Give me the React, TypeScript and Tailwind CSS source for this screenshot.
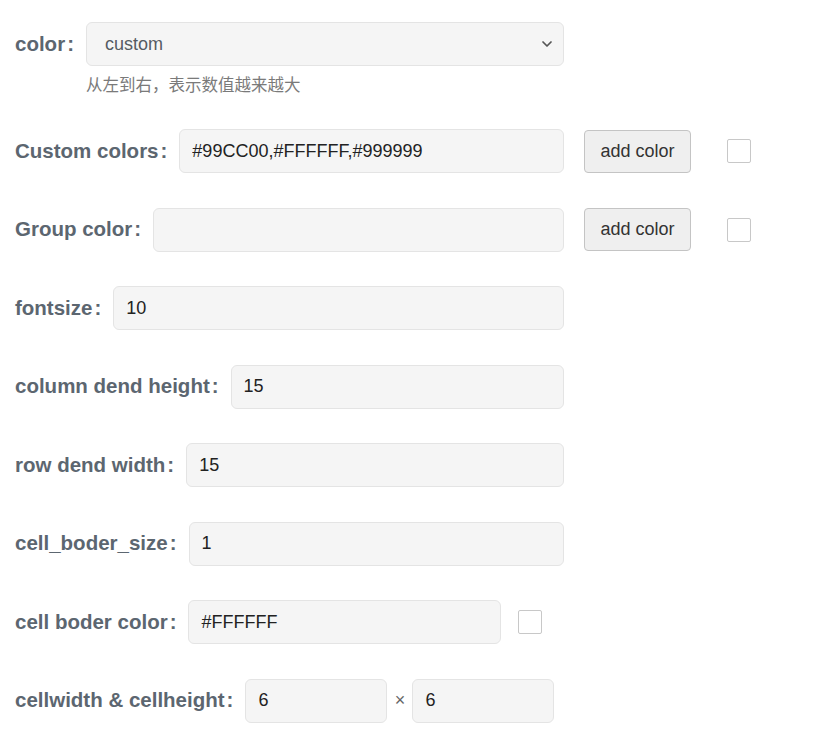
import React from 'react';
import { ChevronDown } from 'lucide-react';

const font = "font-['Liberation_Sans','Noto_Sans_CJK_SC',sans-serif]";

function Label({ text }: { text: string }) {
  return (
    <label className="shrink-0 mr-3 text-[20.5px] font-bold text-[#5c6670] whitespace-nowrap">
      {text}
      <span className="ml-[2px]">:</span>
    </label>
  );
}

function TextBox({ value, className = 'flex-1' }: { value: string; className?: string }) {
  return (
    <input
      defaultValue={value}
      className={`${className} min-w-0 h-[44px] bg-[#f5f5f5] border border-[#e4e4e4] rounded-[6px] px-3 text-[18px] text-[#222] outline-none`}
    />
  );
}

function AddButton() {
  return (
    <button className="ml-5 w-[107px] h-[43px] bg-[#efefef] border border-[#c4c4c4] rounded-[4px] text-[18px] text-[#333]">
      add color
    </button>
  );
}

function Check({ className }: { className: string }) {
  return <span className={`${className} block w-6 h-6 bg-white border border-[#c8c8c8] rounded-[2px]`} />;
}

export default function App() {
  return (
    <div className={`${font} bg-white min-h-[743px] pl-[15px] pt-[22px] flex flex-col gap-[34.5px]`}>
      {/* color select + hint */}
      <div>
        <div className="flex items-center w-[549px]">
          <Label text="color" />
          <div className="relative flex-1 h-[44px] bg-[#f5f5f5] border border-[#e4e4e4] rounded-[6px] flex items-center pl-[18px] pr-2">
            <span className="flex-1 text-[18px] text-[#555b63]">custom</span>
            <ChevronDown className="w-4 h-4 text-[#555]" strokeWidth={2.6} />
          </div>
        </div>
        <div className="h-[28.5px] pt-[9px] pl-[71px] text-[16.5px] leading-[20px] text-[#7a7a7a]">
          从左到右，表示数值越来越大
        </div>
      </div>

      <div className="flex items-center">
        <div className="flex items-center w-[549px]">
          <Label text="Custom colors" />
          <TextBox value="#99CC00,#FFFFFF,#999999" />
        </div>
        <AddButton />
        <Check className="ml-9" />
      </div>

      <div className="flex items-center">
        <div className="flex items-center w-[549px]">
          <Label text="Group color" />
          <TextBox value="" />
        </div>
        <AddButton />
        <Check className="ml-9" />
      </div>

      <div className="flex items-center w-[549px]">
        <Label text="fontsize" />
        <TextBox value="10" />
      </div>

      <div className="flex items-center w-[549px]">
        <Label text="column dend height" />
        <TextBox value="15" />
      </div>

      <div className="flex items-center w-[549px]">
        <Label text="row dend width" />
        <TextBox value="15" />
      </div>

      <div className="flex items-center w-[549px]">
        <Label text="cell_boder_size" />
        <TextBox value="1" />
      </div>

      <div className="flex items-center">
        <div className="flex items-center w-[486px]">
          <Label text="cell boder color" />
          <TextBox value="#FFFFFF" />
        </div>
        <Check className="ml-[17px]" />
      </div>

      <div className="flex items-center">
        <Label text="cellwidth & cellheight" />
        <TextBox value="6" className="w-[142px]" />
        <span className="w-[25px] text-center text-[18px] text-[#666]">×</span>
        <TextBox value="6" className="w-[142px]" />
      </div>
    </div>
  );
}
